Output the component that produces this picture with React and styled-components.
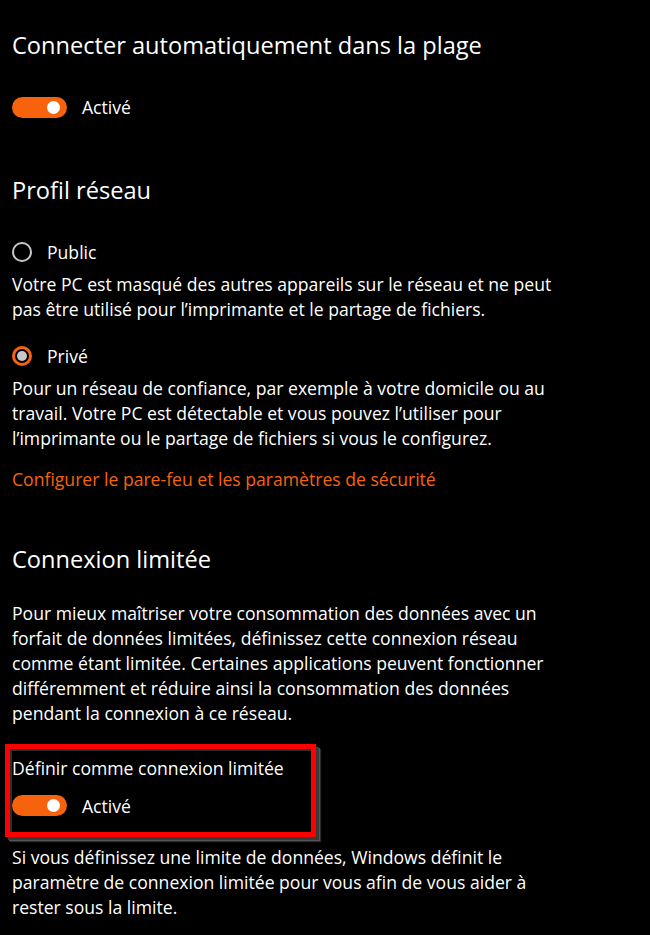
import React from "react";
import styled, { createGlobalStyle } from "styled-components";

const Global = createGlobalStyle`
  html, body { margin: 0; padding: 0; background: #000; }
  body { font-family: "Open Sans", "Noto Sans", sans-serif; color: #fff; }
`;

const ORANGE = "#f7630c";

const Page = styled.div`
  width: 650px;
  height: 935px;
  box-sizing: border-box;
  padding: 0 12px;
  background: #000;
  overflow: hidden;
`;

const Heading = styled.h2`
  margin: ${(p) => p.$mt}px 0 0;
  font-size: 23.6px;
  font-weight: 400;
  line-height: 32px;
`;

const Para = styled.p`
  margin: ${(p) => p.$mt}px 0 0;
  font-size: 17.6px;
  line-height: 25px;
  color: #fff;
`;

const Link = styled(Para)`
  color: ${ORANGE};
`;

const Row = styled.div`
  display: flex;
  align-items: center;
  gap: 15px;
  margin-top: ${(p) => p.$mt}px;
  height: 20px;
  font-size: 17.6px;
`;

const Track = styled.span`
  width: 55px;
  height: 21px;
  border-radius: 11px;
  background: ${ORANGE};
  position: relative;
  flex: none;
`;

const Knob = styled.span`
  position: absolute;
  right: 7px;
  top: 4px;
  width: 13px;
  height: 13px;
  border-radius: 50%;
  background: #fff;
`;

const Radio = styled.span`
  width: 20px;
  height: 20px;
  box-sizing: border-box;
  border-radius: 50%;
  border: ${(p) => (p.$on ? `3px solid ${ORANGE}` : "2px solid #c8c8c8")};
  display: flex;
  align-items: center;
  justify-content: center;
  flex: none;
  &::after {
    content: "";
    display: ${(p) => (p.$on ? "block" : "none")};
    width: 10px;
    height: 10px;
    border-radius: 50%;
    background: #c8c8c8;
  }
`;

const Highlight = styled.div`
  margin: 17.5px 0 0 -7px;
  width: 311px;
  box-sizing: border-box;
  border: 5px solid #ff0000;
  padding: 7.5px 0 16px 2px;
  box-shadow: 3px 3px 0 #3a3a3a, 4px 4px 0 #555, 5px 5px 1px #2a2a2a,
    inset 2px 2px 0 #2e2e2e;
`;

const Label = styled.div`
  font-size: 17.6px;
  line-height: 25px;
  white-space: nowrap;
`;

const Toggle = ({ mt }) => (
  <Row $mt={mt}>
    <Track>
      <Knob />
    </Track>
    <span>Activé</span>
  </Row>
);

export default function App() {
  return (
    <>
      <Global />
      <Page>
        <Heading $mt={29}>Connecter automatiquement dans la plage</Heading>
        <Toggle mt={36} />

        <Heading $mt={57}>Profil réseau</Heading>
        <Row $mt={36}>
          <Radio />
          <span>Public</span>
        </Row>
        <Para $mt={10}>
          Votre PC est masqué des autres appareils sur le réseau et ne peut
          <br />
          pas être utilisé pour l’imprimante et le partage de fichiers.
        </Para>
        <Row $mt={23.5}>
          <Radio $on />
          <span>Privé</span>
        </Row>
        <Para $mt={10.5}>
          Pour un réseau de confiance, par exemple à votre domicile ou au
          <br />
          travail. Votre PC est détectable et vous pouvez l’utiliser pour
          <br />
          l’imprimante ou le partage de fichiers si vous le configurez.
        </Para>
        <Link $mt={16}>Configurer le pare-feu et les paramètres de sécurité</Link>

        <Heading $mt={50.5}>Connexion limitée</Heading>
        <Para $mt={26.5}>
          Pour mieux maîtriser votre consommation des données avec un
          <br />
          forfait de données limitées, définissez cette connexion réseau
          <br />
          comme étant limitée. Certaines applications peuvent fonctionner
          <br />
          différemment et réduire ainsi la consommation des données
          <br />
          pendant la connexion à ce réseau.
        </Para>
        <Highlight>
          <Label>Définir comme connexion limitée</Label>
          <Toggle mt={14.5} />
        </Highlight>
        <Para $mt={8.5}>
          Si vous définissez une limite de données, Windows définit le
          <br />
          paramètre de connexion limitée pour vous afin de vous aider à
          <br />
          rester sous la limite.
        </Para>
      </Page>
    </>
  );
}
